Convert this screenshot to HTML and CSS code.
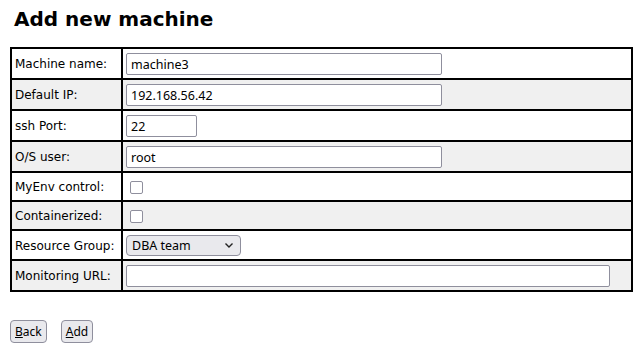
FILE: index.html
```html
<!DOCTYPE html>
<html>
	<head>
		<meta charset="utf-8">
		<title>Add new machine</title>
		<link rel="stylesheet" href="styles.css">
	</head>
	<body>
		<h2 class="title">Add new machine</h2>
		<form>
			<table class="machine">
				<tr>
					<td class="lbl">Machine name:</td>
					<td><input type="text" class="txt" value="machine3"></td>
				</tr>
				<tr class="alt">
					<td class="lbl">Default IP:</td>
					<td><input type="text" class="txt" value="192.168.56.42"></td>
				</tr>
				<tr>
					<td class="lbl">ssh Port:</td>
					<td><input type="text" class="txt port" value="22"></td>
				</tr>
				<tr class="alt">
					<td class="lbl">O/S user:</td>
					<td><input type="text" class="txt" value="root"></td>
				</tr>
				<tr class="short">
					<td class="lbl">MyEnv control:</td>
					<td><span class="chk"></span></td>
				</tr>
				<tr class="alt short">
					<td class="lbl">Containerized:</td>
					<td><span class="chk"></span></td>
				</tr>
				<tr class="mid">
					<td class="lbl">Resource Group:</td>
					<td>
						<span class="sel">DBA team
							<svg width="10" height="7" viewBox="0 0 10 7"><path d="M1.5 1.5 L5 5 L8.5 1.5" fill="none" stroke="#222" stroke-width="1.4"/></svg>
						</span>
					</td>
				</tr>
				<tr class="alt">
					<td class="lbl">Monitoring URL:</td>
					<td><input type="text" class="txt url" value=""></td>
				</tr>
			</table>
			<div class="buttons">
				<button type="button" class="btn"><u>B</u>ack</button>
				<button type="button" class="btn"><u>A</u>dd</button>
			</div>
		</form>
	</body>
</html>
```
FILE: styles.css
```css
html,body {margin: 0px;padding: 0px;}
body {padding: 10px;font-family: "DejaVu Sans", Verdana, sans-serif;font-size: 12px;color: #000;}
.title {font-size: 20px;font-weight: bold;margin: 0px 0px 19px 4px;line-height: 18px;}
table.machine {border-collapse: collapse;border: 2px solid #000;width: 623px;}
table.machine td {border: 2px solid #000;padding: 4px 3px 3px 3px;height: 22px;}
table.machine tr.short td {height: 20px;}
table.machine tr.mid td {height: 21px;}
table.machine td.lbl {width: 103px;white-space: nowrap;}
tr.alt td {background: #f0f0f0;}
.txt {box-sizing: border-box;width: 316px;height: 22px;border: 1px solid #8f8f9d;border-radius: 2px;background: #fff;
	font-family: "Noto Sans", sans-serif;font-size: 12.5px;padding: 0px 4px;margin: 0px;vertical-align: middle;}
.txt.port {width: 71px;}
.txt.url {width: 484px;}
.chk {display: inline-block;width: 11px;height: 11px;border: 1px solid #8f8f9d;border-radius: 2px;background: #fff;vertical-align: middle;margin-left: 4px;}
.sel {display: inline-flex;align-items: center;justify-content: space-between;box-sizing: border-box;width: 115px;height: 21px;
	border: 1px solid #8f8f9d;border-radius: 4px;background: #e9e9ed;padding: 0px 6px 0px 5px;
	font-family: "Noto Sans", sans-serif;font-size: 12.5px;vertical-align: middle;}
.buttons {margin-top: 28px;display: flex;gap: 14px;}
.btn {box-sizing: border-box;height: 23px;border: 1px solid #8f8f9d;border-radius: 4px;background: #e9e9ed;
	font-family: "Noto Sans", sans-serif;font-size: 12px;padding: 0px 4px;color: #000;}
```
